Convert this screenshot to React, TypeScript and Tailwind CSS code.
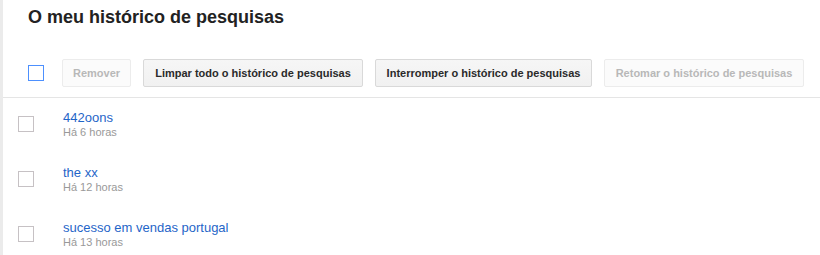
import React from "react";

const items = [
  { q: "442oons", t: "Há 6 horas" },
  { q: "the xx", t: "Há 12 horas" },
  { q: "sucesso em vendas portugal", t: "Há 13 horas" },
];

function Btn({ children, disabled, w }: { children: React.ReactNode; disabled?: boolean; w: string }) {
  return (
    <div
      className={
        (disabled
          ? "h-[28px] flex items-center justify-center rounded-[2px] border border-[#ececec] bg-[#fbfbfb] text-[#b8b8b8] text-[11px] font-bold whitespace-nowrap "
          : "h-[28px] flex items-center justify-center rounded-[2px] border border-[#d9d9d9] bg-gradient-to-b from-[#f6f6f6] to-[#f1f1f1] text-[#2a2a2a] text-[11px] font-bold whitespace-nowrap ") + w
      }
    >
      {children}
    </div>
  );
}

export default function App() {
  return (
    <div
      className="w-[820px] h-[255px] bg-white border-l-[3px] border-[#ebebeb] overflow-hidden"
      style={{ fontFamily: '"Liberation Sans", Arial, sans-serif' }}
    >
      <div className="pt-[5px] pl-[25px] text-[18px] leading-[24px] font-bold text-[#222]">
        O meu histórico de pesquisas
      </div>
      <div className="mt-[30px] pb-[10px] border-b border-[#e5e5e5] flex items-center pl-[25px]">
        <div className="w-[16px] h-[16px] border border-[#4d90fe] bg-white mr-[18px]" />
        <div className="flex gap-[12px]">
          <Btn disabled w="w-[69px]">Remover</Btn>
          <Btn w="w-[220px]">Limpar todo o histórico de pesquisas</Btn>
          <Btn w="w-[217px]">Interromper o histórico de pesquisas</Btn>
          <Btn disabled w="w-[200px]">Retomar o histórico de pesquisas</Btn>
        </div>
      </div>
      <div>
        {items.map((it) => (
          <div key={it.q} className="h-[55px] flex items-start pl-[15px]">
            <div className="mt-[18px] w-[16px] h-[16px] border border-[#c6c1c4] bg-white" />
            <div className="mt-[12px] ml-[29px] flex flex-col">
              <span className="text-[13px] leading-[15px] text-[#1f65c8]">{it.q}</span>
              <span className="text-[11px] leading-[14px] text-[#999]">{it.t}</span>
            </div>
          </div>
        ))}
      </div>
    </div>
  );
}
